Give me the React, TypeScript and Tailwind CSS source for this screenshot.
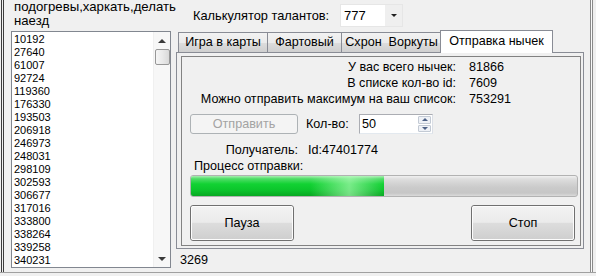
const ids = [
  "10192", "27640", "61007", "92724", "119360", "176330", "193503", "206918", "246973",
  "248031", "298109", "302593", "306677", "317016", "333800", "338264", "339258", "340231",
];

const stats = [
  { label: "У вас всего нычек:", value: "81866" },
  { label: "В списке кол-во id:", value: "7609" },
  { label: "Можно отправить максимум на ваш список:", value: "753291" },
];

const progress = { done: 3269, total: 6522 };

function Button({ children, disabled, className = "" }: { children: React.ReactNode; disabled?: boolean; className?: string }) {
  if (disabled) {
    return (
      <div className={`flex items-center justify-center rounded-[3px] border border-[#adb2b5] bg-[#f4f4f4] text-[#a3a3a3] ${className}`}>
        {children}
      </div>
    );
  }
  return (
    <div className={`rounded-[3px] border border-[#707070] ${className}`}>
      <div className="flex h-full items-center justify-center rounded-[2px] border border-[#fcfcfc] bg-[linear-gradient(to_bottom,#f2f2f2_0%,#ebebeb_48%,#dddddd_50%,#cfcfcf_100%)]">
        {children}
      </div>
    </div>
  );
}

function Tab({ label, className = "" }: { label: string; className?: string }) {
  return (
    <div className={`flex h-[20px] items-center justify-center border-t border-l border-[#898c95] bg-[linear-gradient(to_bottom,#f2f2f2_0%,#ebebeb_50%,#dddddd_51%,#cfcfcf_100%)] ${className}`}>
      {label}
    </div>
  );
}

function ListBox() {
  return (
    <div className="mt-[3px] ml-[6px] flex h-[237px] w-[160px] border border-[#828790] bg-white">
      <div className="flex-1 pt-[1px] pl-[2px] text-[11px] leading-[13px] text-black">
        {ids.map((id) => (
          <div key={id}>{id}</div>
        ))}
      </div>
      <div className="flex w-[17px] flex-col items-center border-l border-[#f0f0f0] bg-[#f7f7f7]">
        <div className="flex h-[17px] w-full items-center justify-center">
          <div className="h-0 w-0 border-r-[4px] border-b-[4px] border-l-[4px] border-r-transparent border-b-[#3a3a3a] border-l-transparent" />
        </div>
        <div className="h-[16px] w-[15px] rounded-[2px] border border-[#979797] bg-[linear-gradient(to_right,#f5f5f5_0%,#e9e9e9_50%,#d9d9d9_100%)]" />
        <div className="flex-1" />
        <div className="flex h-[17px] w-full items-center justify-center">
          <div className="h-0 w-0 border-t-[4px] border-r-[4px] border-l-[4px] border-t-[#3a3a3a] border-r-transparent border-l-transparent" />
        </div>
      </div>
    </div>
  );
}

function NumericUpDown({ value }: { value: string }) {
  return (
    <div className="flex h-[20px] w-[74px] border border-[#abadb3] border-r-[#dbdfe6] border-b-[#e3e9ef] bg-white">
      <div className="flex-1 pl-[2px] leading-[18px]">{value}</div>
      <div className="flex w-[15px] flex-col gap-[1px] p-[1px]">
        <div className="flex flex-1 items-center justify-center rounded-[1px] border border-[#c3cad4] bg-[#eef1f6]">
          <div className="h-0 w-0 border-r-[3px] border-b-[3px] border-l-[3px] border-r-transparent border-b-[#4d6185] border-l-transparent" />
        </div>
        <div className="flex flex-1 items-center justify-center rounded-[1px] border border-[#c3cad4] bg-[#eef1f6]">
          <div className="h-0 w-0 border-t-[3px] border-r-[3px] border-l-[3px] border-t-[#4d6185] border-r-transparent border-l-transparent" />
        </div>
      </div>
    </div>
  );
}

function ProgressBar({ value, max }: { value: number; max: number }) {
  return (
    <div className="mt-[1px] ml-[8px] h-[22px] w-[388px] overflow-hidden rounded-[3px] border border-[#b2b2b2] bg-[linear-gradient(to_bottom,#f0f0f0_0%,#dedede_15%,#cbcbcb_55%,#c6c6c6_85%,#dadada_100%)]">
      <div className="h-full bg-[linear-gradient(to_bottom,#a7eeb0_0%,#4fdd67_14%,#12d233_40%,#0cc52c_70%,#08a822_100%)]" style={{ width: `${(value / max) * 100}%` }}>
        <div className="h-full bg-[linear-gradient(to_right,rgba(255,255,255,0)_0%,rgba(255,255,255,0)_62%,rgba(190,255,195,0.6)_82%,rgba(255,255,255,0.15)_94%,rgba(255,255,255,0)_100%)]" />
      </div>
    </div>
  );
}

export default function App() {
  return (
    <div className="h-[276px] w-[596px] overflow-hidden bg-[#f0f0f0] font-['Liberation_Sans',Arial,sans-serif] text-[12.6px] text-black">
      <div className="flex h-[272px]">
        <div className="flex w-[5px]">
          <div className="w-[1px]" />
          <div className="w-[1px] bg-[#3c3c3c]" />
          <div className="w-[1px]" />
          <div className="w-[1px] bg-[#3c3c3c]" />
        </div>

        <div className="w-[167px]">
          <div className="pl-[9px] text-[13.2px] leading-[14px]">
            подогревы,харкать,делать
            <br />
            наезд
          </div>
          <ListBox />
        </div>

        <div className="w-[418px]">
          <div className="flex h-[30px] pt-[4px] pl-[21px]">
            <div className="w-[147px] text-[12.8px] leading-[23px]">Калькулятор талантов:</div>
            <div className="flex h-[23px] w-[63px] border border-[#e6e6e6] bg-white text-[13px]">
              <div className="flex-1 pl-[3px] leading-[21px]">777</div>
              <div className="flex w-[17px] items-center justify-center bg-[#efefef]">
                <div className="h-0 w-0 border-t-[3px] border-r-[3px] border-l-[3px] border-t-[#202020] border-r-transparent border-l-transparent" />
              </div>
            </div>
          </div>

          <div className="ml-[4px] w-[408px]">
            <div className="flex h-[22px] items-end pl-[2px]">
              <Tab label="Игра в карты" className="w-[89px]" />
              <Tab label="Фартовый" className="w-[74px]" />
              <Tab label="Схрон  Воркуты" className="w-[101px] border-r whitespace-pre" />
              <div className="relative z-10 -mb-[1px] -ml-[2px] flex h-[23px] w-[113px] items-center justify-center border border-b-0 border-[#898c95] bg-white pb-[2px]">
                Отправка нычек
              </div>
            </div>

            <div className="h-[197px] border border-[#898c95] pt-[3px] pr-[2px] pb-[2px] pl-[4px]">
              <div className="h-[190px] border border-[#828282] pt-[2px]">
                {stats.map((s) => (
                  <div key={s.label} className="flex h-[16px] leading-[16px]">
                    <div className="w-[274px] text-right">{s.label}</div>
                    <div className="ml-[13px]">{s.value}</div>
                  </div>
                ))}

                <div className="mt-[7px] flex h-[20px] items-center">
                  <Button disabled className="ml-[8px] h-[20px] w-[108px]">
                    Отправить
                  </Button>
                  <div className="ml-[8px] w-[53px]">Кол-во:</div>
                  <NumericUpDown value="50" />
                </div>

                <div className="mt-[8px] flex h-[16px] leading-[16px]">
                  <div className="w-[116px] text-right">Получатель:</div>
                  <div className="ml-[10px]">Id:47401774</div>
                </div>
                <div className="h-[16px] pl-[12px] leading-[16px]">Процесс отправки:</div>

                <ProgressBar value={progress.done} max={progress.total} />

                <div className="mt-[8px] flex h-[36px]">
                  <Button className="ml-[8px] h-[36px] w-[104px]">Пауза</Button>
                  <Button className="mr-[5px] ml-auto h-[36px] w-[104px]">Стоп</Button>
                </div>
              </div>
            </div>
          </div>

          <div className="h-[23px] pl-[8px] leading-[23px]">{progress.done}</div>
        </div>

        <div className="flex w-[6px]">
          <div className="w-[1px] bg-[#8a8a8a]" />
          <div className="w-[1px] bg-[#fafafa]" />
          <div className="w-[1px] bg-[#8a8a8a]" />
        </div>
      </div>
      <div className="h-[1px] bg-[#a0a0a0]" />
      <div className="h-[3px]" />
    </div>
  );
}
